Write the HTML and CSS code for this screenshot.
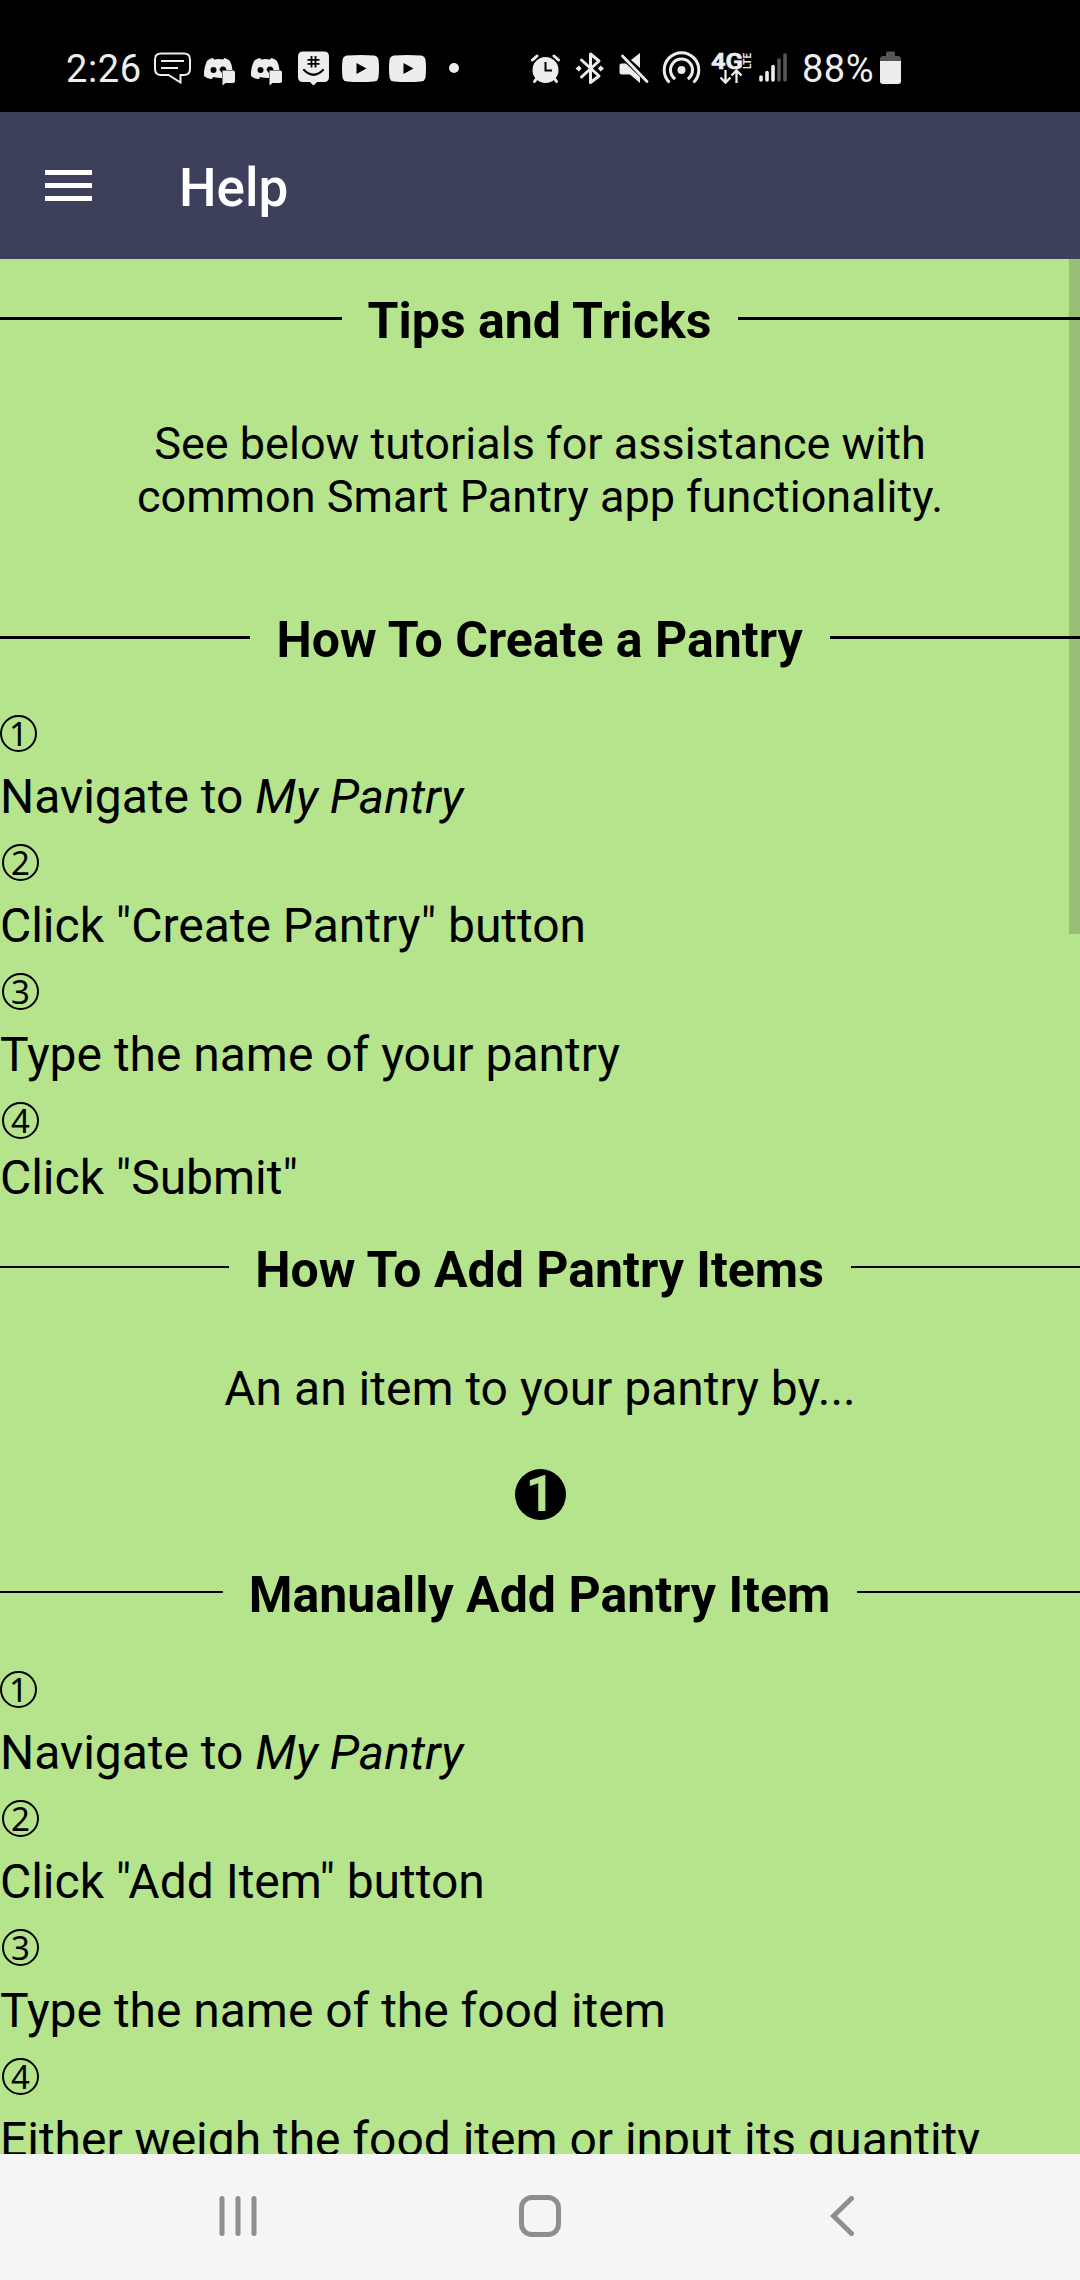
FILE: index.html
```html
<!DOCTYPE html>
<html lang="en">
<head>
<meta charset="utf-8">
<title>Help</title>
<link rel="stylesheet" href="styles.css">
</head>
<body>
<div class="screen">
  <div class="status">
    <span class="clock">2:26</span>
    <svg class="chat" width="38" height="112" viewBox="154 0 38 112" fill="none" stroke="#ededed" stroke-width="2"><path d="M161 53.5H184Q190 53.5 190 59.500V69Q190 75 184 75H180.500V82.500L168.500 75H161Q155 75 155 69V59.500Q155 53.500 161 53.500Z"/><path d="M161 61H184M161 68H178"/></svg>
    <svg class="discord" width="32" height="112" viewBox="204 0 32 112"><path fill="#ededed" d="M211 58.500Q207 60 206.500 62Q203.500 69 204 76Q208 79.500 212 79L213 77Q217 78 222 78V70H232.500Q232 65 230 61Q228 59 224.500 58L223 59.500Q218 58.500 214 59.500L213 58Z"/><circle cx="213.500" cy="70" r="3"/><path d="M219.500 70Q220 66.500 223 66.500Q226 66.500 226.500 70L222 73Z"/><path fill="#ededed" d="M222.500 70.500H233Q235 70.500 235 72.500V81Q235 83 233 83H225.500L222.500 85.500Z"/></svg>
    <svg class="discord" width="32" height="112" viewBox="204 0 32 112"><path fill="#ededed" d="M211 58.500Q207 60 206.500 62Q203.500 69 204 76Q208 79.500 212 79L213 77Q217 78 222 78V70H232.500Q232 65 230 61Q228 59 224.500 58L223 59.500Q218 58.500 214 59.500L213 58Z"/><circle cx="213.500" cy="70" r="3"/><path d="M219.500 70Q220 66.500 223 66.500Q226 66.500 226.500 70L222 73Z"/><path fill="#ededed" d="M222.500 70.500H233Q235 70.500 235 72.500V81Q235 83 233 83H225.500L222.500 85.500Z"/></svg>
    <svg class="groupme" width="31" height="112" viewBox="298 0 31 112"><path fill="#ededed" d="M303 51.500H324Q329 51.500 329 56.500V77Q329 82 324 82H317L313.500 85.500L310 82H303Q298 82 298 77V56.500Q298 51.500 303 51.500Z"/><path fill="none" stroke="#000" stroke-width="1.800" d="M311.500 56V67.500M315.500 56V67.500M307.500 59.800H319.500M307.500 63.800H319.500"/><path fill="none" stroke="#000" stroke-width="2.200" stroke-linecap="round" d="M304 70Q313.500 79.500 323 70"/></svg>
    <svg class="video" width="37" height="112" viewBox="342 0 37 112"><path fill="#ededed" d="M347 55.500Q360.500 54.500 374 55.500Q378 56 378.500 60Q379.500 68.500 378.500 77Q378 81 374 81.500Q360.500 82.500 347 81.500Q343 81 342.500 77Q341.500 68.500 342.500 60Q343 56 347 55.500Z"/><path d="M356.500 63V74L366.500 68.500Z"/></svg>
    <svg class="video" width="37" height="112" viewBox="342 0 37 112"><path fill="#ededed" d="M347 55.500Q360.500 54.500 374 55.500Q378 56 378.500 60Q379.500 68.500 378.500 77Q378 81 374 81.500Q360.500 82.500 347 81.500Q343 81 342.500 77Q341.500 68.500 342.500 60Q343 56 347 55.500Z"/><path d="M356.500 63V74L366.500 68.500Z"/></svg>
    <svg class="more" width="10" height="112" viewBox="449 0 10 112"><circle cx="454" cy="68" r="5" fill="#ededed"/></svg>
    <svg class="alarm" width="30" height="112" viewBox="531 0 30 112" stroke="#ededed" fill="none"><circle cx="545.500" cy="70" r="13" fill="#ededed" stroke="none"/><path stroke-width="3" stroke-linecap="round" d="M532.500 60L537 56M558.500 60L554 56M537 78L534.500 81.500M554 78L556.500 81.500"/><path stroke="#000" stroke-width="2" d="M545.500 62V70.500H552"/></svg>
    <svg class="bluetooth" width="30" height="112" viewBox="575 0 30 112"><path fill="none" stroke="#ededed" stroke-width="3" stroke-linejoin="round" stroke-linecap="round" d="M581.500 60L599 76L590.500 82.500V54L599 61L581.500 77"/><path fill="#ededed" d="M575.500 68.500L579 65.500L581.500 68.500L579 71.500ZM604 68.500L600.500 65.500L598 68.500L600.500 71.500Z"/></svg>
    <svg class="mute" width="30" height="112" viewBox="619 0 30 112" fill="#ededed"><path d="M621.500 63.500H626L640 77V83L630 74.500H621.500Q619.500 74.500 619.500 72.500V65.500Q619.500 63.500 621.500 63.500ZM640 53V68L631 60Z"/><path stroke="#ededed" stroke-width="2.800" stroke-linecap="round" d="M622.500 56L647 81.500"/></svg>
    <svg class="hotspot" width="39" height="112" viewBox="662 0 39 112" fill="none" stroke="#ededed" stroke-width="3"><circle cx="681.500" cy="70" r="4" fill="#ededed" stroke="none"/><path d="M675.200 79A11 11 0 1 1 687.800 79M669.500 82.500A17.300 17.300 0 1 1 693.500 82.500"/></svg>
    <svg class="network" width="41" height="112" viewBox="711 0 41 112"><text class="net4g" x="711" y="68.500" textLength="32" lengthAdjust="spacingAndGlyphs">4G</text><text class="lte" transform="translate(750.500 69) rotate(-90)" textLength="16" lengthAdjust="spacingAndGlyphs">LTE</text><path fill="none" stroke="#ededed" stroke-width="2.300" d="M725.500 70V82M720.500 77.500L725.500 82.500L730.500 77.500M736.500 83V71M731.500 75.500L736.500 70.500L741.500 75.500"/></svg>
    <svg class="signal" width="28" height="112" viewBox="759 0 28 112" stroke-width="3.600" stroke-linecap="round"><path stroke="#ededed" d="M761 77V80M767 72.500V80M773 66.500V80"/><path stroke="#555" d="M779 60V80M785 55V80"/></svg>
    <span class="percent">88%</span>
    <svg class="battery" width="21" height="112" viewBox="880 0 21 112"><path fill="#555" d="M880 62V59Q880 56 883 56H886V53Q886 51.500 887.500 51.500H893.500Q895 51.500 895 53V56H898Q901 56 901 59V62Z"/><path fill="#ededed" d="M880 61H901V81Q901 84 898 84H883Q880 84 880 81Z"/></svg>
  </div>
  <header class="appbar">
    <div class="menu"><i></i><i></i><i></i></div>
    <h1>Help</h1>
  </header>
  <main class="content">
    <h2 class="divider first"><span>Tips and Tricks</span></h2>
    <p class="intro">See below tutorials for assistance with<br>common Smart Pantry app functionality.</p>
    <h2 class="divider create"><span>How To Create a Pantry</span></h2>
    <div class="steps">
      <div class="num one"><span>1</span></div><div class="step">Navigate to <em>My Pantry</em></div>
      <div class="num"><span>2</span></div><div class="step">Click "Create Pantry" button</div>
      <div class="num"><span>3</span></div><div class="step">Type the name of your pantry</div>
      <div class="num"><span>4</span></div><div class="step last">Click "Submit"</div>
    </div>
    <h2 class="divider thin add"><span>How To Add Pantry Items</span></h2>
    <p class="lead">An an item to your pantry by...</p>
    <div class="badge">1</div>
    <h2 class="divider thin manual"><span>Manually Add Pantry Item</span></h2>
    <div class="steps item-steps">
      <div class="num one"><span>1</span></div><div class="step">Navigate to <em>My Pantry</em></div>
      <div class="num"><span>2</span></div><div class="step">Click "Add Item" button</div>
      <div class="num"><span>3</span></div><div class="step">Type the name of the food item</div>
      <div class="num"><span>4</span></div><div class="step">Either weigh the food item or input its quantity</div>
    </div>
    <div class="scrollbar"></div>
  </main>
  <nav class="navbar">
    <svg width="40" height="46" viewBox="0 0 40 46"><path stroke="#8e8e8e" stroke-width="5" stroke-linecap="round" d="M4 5.500V40.500M20 5.500V40.500M36 5.500V40.500"/></svg>
    <svg class="home" width="42" height="46" viewBox="0 0 42 46"><rect x="2.500" y="4.500" width="37" height="37" rx="10.500" fill="none" stroke="#8e8e8e" stroke-width="5"/></svg>
    <svg class="back" width="24" height="46" viewBox="0 0 24 46"><path fill="none" stroke="#8e8e8e" stroke-width="5" stroke-linecap="round" d="M21.500 5.500L3.500 23L21.500 40.500"/></svg>
  </nav>
</div>
</body>
</html>
```
FILE: styles.css
```css
* { box-sizing: border-box; }
body { margin: 0; font-family: Roboto, sans-serif; color: #000; }
h1, h2, p { margin: 0; }
.screen { width: 1080px; height: 2280px; display: flex; flex-direction: column; overflow: hidden; }

.status { height: 112px; flex: none; background: #000; color: #ededed; display: flex; font-size: 38px; line-height: 139px; white-space: nowrap; overflow: hidden; }
.status svg { flex: none; display: block; }
.clock { width: 88px; margin-left: 66px; letter-spacing: .6px; }
.discord { margin-left: 12px; }
.discord + .discord { margin-left: 15px; }
.groupme { margin-left: 15px; }
.video { margin-left: 13px; }
.video + .video { margin-left: 10px; }
.more { margin-left: 23px; }
.alarm { margin-left: 72px; }
.bluetooth { margin-left: 14px; }
.mute { margin-left: 14px; }
.hotspot { margin-left: 13px; }
.network { margin-left: 10px; }
.signal { margin-left: 7px; }
.percent { width: 78px; margin-left: 15px; letter-spacing: .5px; }
.net4g { font: 700 22px Roboto, sans-serif; fill: #ededed; stroke: #ededed; stroke-width: .5px; }
.lte { font: 700 10px Roboto, sans-serif; fill: #ededed; }

.appbar { height: 147px; flex: none; background: #3d405b; color: #fff; display: flex; padding-left: 45px; }
.menu { width: 47px; margin-top: 58px; display: flex; flex-direction: column; gap: 8px; }
.menu i { height: 5px; background: #fff; }
.appbar h1 { margin-left: 87px; font-size: 53px; font-weight: 500; line-height: 152px; }

.content { height: 1895px; flex: none; background: #b5e48c; overflow: hidden; position: relative; }
.divider { height: 70px; display: flex; font-size: 50px; line-height: 70px; font-weight: 700; white-space: nowrap; }
.divider::before, .divider::after { content: ""; flex: 1; height: 3px; margin-top: 31px; background: #000; }
.divider.thin::before, .divider.thin::after { height: 2px; }
.divider span { padding: 0 27px 0 26px; }
.first { margin-top: 27px; }
.intro { margin-top: 61px; font-size: 45px; line-height: 53px; text-align: center; }
.create { margin-top: 82px; }
.steps { padding-top: 25px; }
.item-steps { padding-top: 26px; }
.num { height: 64px; padding: 15px 0 0 2px; display: flex; }
.num.one { padding-left: 0; }
.num span { width: 37px; height: 37px; border: 2px solid #000; border-radius: 50%; font: 400 33px/33px "Noto Sans", sans-serif; text-align: center; }
.step { height: 65px; line-height: 65px; font-size: 48px; letter-spacing: -.02px; white-space: nowrap; }
.step.last { height: 53px; line-height: 53px; }
.add { margin-top: 31px; }
.lead { margin-top: 50px; height: 68px; line-height: 68px; font-size: 48px; text-align: center; }
.badge { width: 51px; height: 51px; margin: 46px auto 0; border-radius: 50%; background: #000; color: #b5e48c; font: 700 50px/51px Roboto, sans-serif; text-align: center; }
.manual { margin-top: 40px; }
.scrollbar { position: absolute; top: 0; right: 0; width: 11px; height: 675px; background: rgba(0, 0, 0, .16); }

.navbar { flex: 1; background: #f5f5f5; display: flex; align-items: flex-start; padding: 39px 0 0 218px; }
.home { margin-left: 261px; }
.back { margin-left: 269px; }
```
